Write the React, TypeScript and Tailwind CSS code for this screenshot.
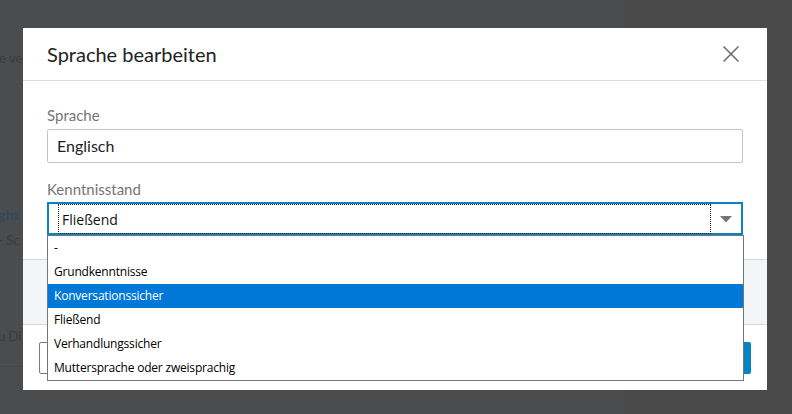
import React from "react";

const options = [
  "-",
  "Grundkenntnisse",
  "Konversationssicher",
  "Fließend",
  "Verhandlungssicher",
  "Muttersprache oder zweisprachig",
];

export default function App() {
  return (
    <div className="relative w-[792px] h-[414px] overflow-hidden bg-[#4a4a4a] font-['Lato',sans-serif]">
      {/* underlying page, dimmed */}
      <div className="flex h-full">
        <div className="w-[626px] h-full bg-[#4b4c4d] border-r border-[#464747] overflow-hidden">
          <div className="h-[50px]" />
          <p className="ml-[-1px] text-[13px] leading-[16px] text-[#3a3b3c] whitespace-nowrap">e ve</p>
          <div className="h-[140px]" />
          <p className="ml-[-2px] text-[14px] leading-[18px] font-bold text-[#34495a] whitespace-nowrap">ght</p>
          <div className="h-[8px]" />
          <p className="ml-[-2px] text-[13px] leading-[16px] text-[#3a3b3c] whitespace-nowrap">- Sc</p>
          <div className="h-[80px]" />
          <p className="ml-[-2px] text-[13px] leading-[16px] text-[#3a3b3c] whitespace-nowrap">u Di</p>
          <div className="h-[22px]" />
          <div className="h-px bg-[#454647]" />
        </div>
        <div className="flex-1" />
      </div>

      {/* modal overlay */}
      <div className="absolute inset-0">
        <div className="relative mt-[28px] ml-[23px] w-[744px] h-[362px] bg-white flex flex-col">
          <div className="h-[53px] shrink-0 border-b border-[#dedede] flex items-center justify-between pl-[24px] pr-[28px]">
            <h2 className="text-[20px] leading-[28px] text-[#222] font-['Lato',sans-serif]">Sprache bearbeiten</h2>
            <svg width="16" height="16" viewBox="0 0 16 16" className="shrink-0">
              <path d="M0.5 0.5 L15.5 15.5 M15.5 0.5 L0.5 15.5" stroke="#6a6a6a" strokeWidth="1.5" fill="none" />
            </svg>
          </div>

          <div className="shrink-0 px-[24px] pt-[24px] pb-[24px]">
            <div className="text-[15px] leading-[20px] text-[#757575] mb-[4px]">Sprache</div>
            <div className="h-[34px] border border-[#c4c4c4] rounded-[2px] pl-[9px] flex items-center text-[16px] text-[#222]">
              Englisch
            </div>
            <div className="mt-[16px] text-[15px] leading-[20px] text-[#757575] mb-[3px]">Kenntnisstand</div>
            <div className="h-[33px] border-2 border-[#0a84c1] flex pt-0">
              <div className="ml-[9px] mt-0 w-[653px] h-[30px] border border-dotted border-[#222] flex items-center pl-[3px] text-[14px] text-[#111] font-['Open_Sans',sans-serif]">
                Fließend
              </div>
              <div className="flex-1 flex items-start justify-center pt-[12px]">
                <svg width="12" height="7" viewBox="0 0 12 7">
                  <path d="M0 0 H12 L6 6.5 Z" fill="#767676" />
                </svg>
              </div>
            </div>
          </div>

          <div className="h-[66px] shrink-0 bg-[#f3f6f9] border-y border-[#d6d6d6]" />

          <div className="flex-1 flex items-center justify-between px-[16px]">
            <button className="h-[32px] px-[16px] border border-[#7a7a7a] rounded-[2px] bg-white text-[14px] text-[#444]">
              Abbrechen
            </button>
            <button className="h-[32px] px-[16px] rounded-[2px] bg-[#0186c1] text-[14px] text-white">
              Speichern
            </button>
          </div>

          {/* native select popup */}
          <ul className="absolute top-[207px] left-[24px] w-[697px] border border-[#767676] bg-white font-['Open_Sans',sans-serif] tracking-[-0.2px]">
            {options.map((o) => (
              <li
                key={o}
                className={
                  o === "Konversationssicher"
                    ? "h-[24px] pl-[6px] flex items-center text-[12px] bg-[#0078d7] text-white"
                    : "h-[24px] pl-[6px] flex items-center text-[12px] text-black"
                }
              >
                {o}
              </li>
            ))}
          </ul>
        </div>
      </div>
    </div>
  );
}
